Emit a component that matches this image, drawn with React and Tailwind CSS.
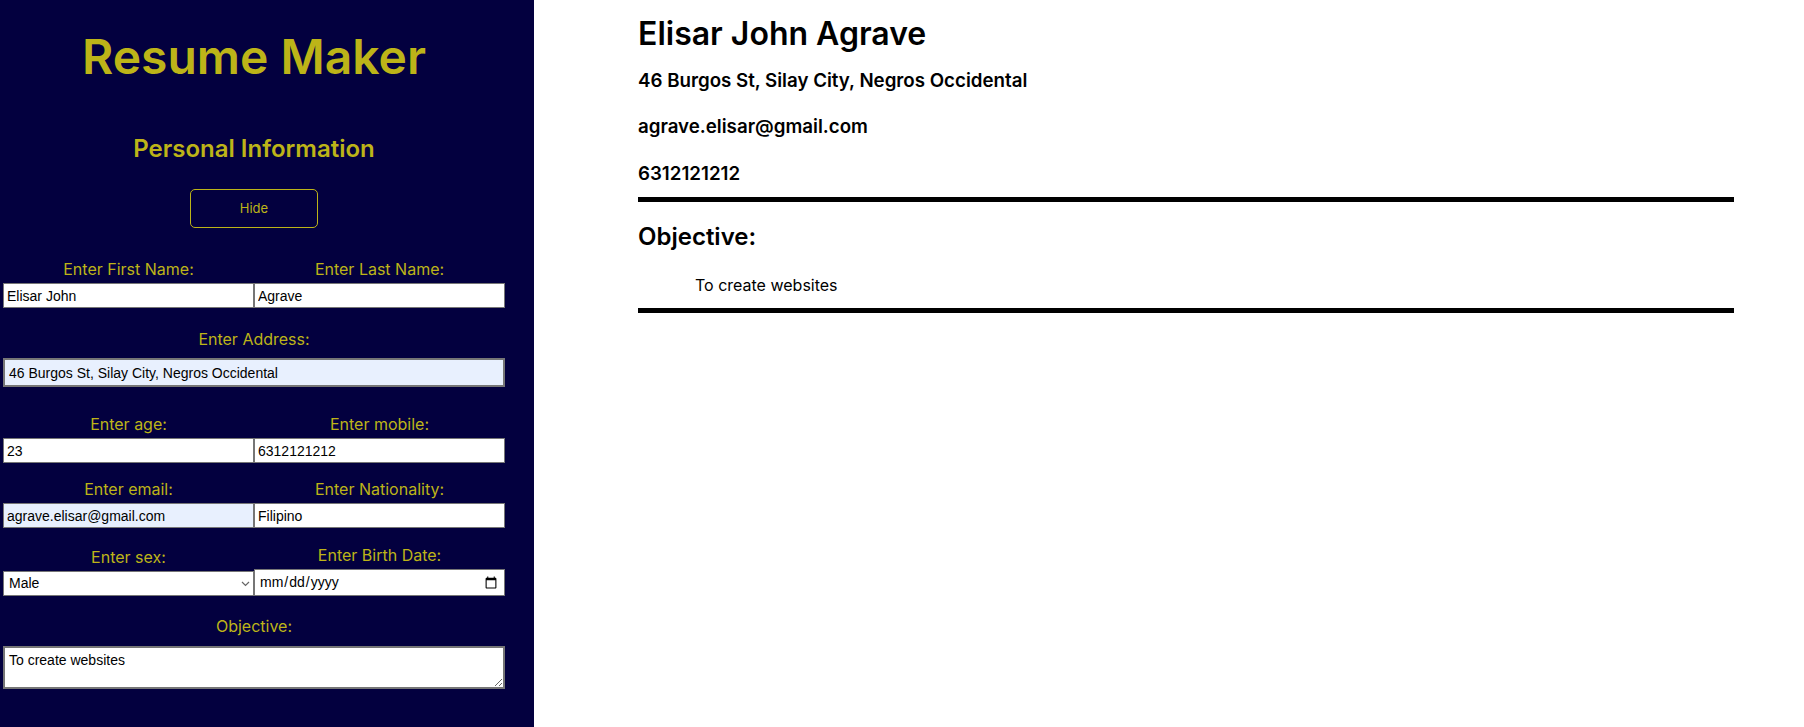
import React, { useState } from "react";

const LabelText = ({ children }) => (
  <label className="block text-center text-[16px] leading-[24px] text-[#bdb418]">{children}</label>
);

const inputCls =
  "block w-full h-[25px] border border-[#767676] bg-white px-[3px] text-[14px] text-black font-['Liberation_Sans',Arial,sans-serif] outline-none";

const App = () => {
  const [form, setForm] = useState({
    firstName: "Elisar John",
    lastName: "Agrave",
    address: "46 Burgos St, Silay City, Negros Occidental",
    age: "23",
    mobile: "6312121212",
    email: "agrave.elisar@gmail.com",
    nationality: "Filipino",
    sex: "Male",
    birthDate: "",
    objective: "To create websites",
  });
  const [hidden, setHidden] = useState(false);

  const update = (key) => (e) => setForm({ ...form, [key]: e.target.value });

  return (
    <div className="flex min-h-screen font-['Inter',sans-serif]">
      {/* Form side */}
      <div className="w-[534px] shrink-0 bg-[#03003f]">
        <div className="w-[508px] flex flex-col items-center pb-8">
          <h1 className="mt-[33px] text-[48px] leading-[48px] font-semibold text-[#bdb418]">Resume Maker</h1>
          <h2 className="mt-[56px] text-[24px] leading-[24px] font-semibold text-[#bdb418]">Personal Information</h2>
          <button
            onClick={() => setHidden(!hidden)}
            className="mt-[28px] w-[128px] h-[39px] rounded-[5px] border border-[#bdb418] text-[13px] text-[#bdb418]"
          >
            {hidden ? "Show" : "Hide"}
          </button>

          {!hidden && (
            <div className="w-[502px] ml-[3px] self-start">
              {/* Names */}
              <div className="mt-[29px] grid grid-cols-2 items-end">
                <div>
                  <LabelText>Enter First Name:</LabelText>
                  <input className={`mt-[2px] ${inputCls}`} value={form.firstName} onChange={update("firstName")} />
                </div>
                <div>
                  <LabelText>Enter Last Name:</LabelText>
                  <input className={`mt-[2px] ${inputCls}`} value={form.lastName} onChange={update("lastName")} />
                </div>
              </div>

              {/* Address */}
              <div className="mt-[19px]">
                <LabelText>Enter Address:</LabelText>
                <input
                  className="mt-[7px] block w-full h-[29px] border-2 border-[#767676] bg-[#e8f0fe] px-[4px] text-[14px] text-black font-['Liberation_Sans',Arial,sans-serif] outline-none"
                  value={form.address}
                  onChange={update("address")}
                />
              </div>

              {/* Age / mobile */}
              <div className="mt-[25px] grid grid-cols-2 items-end">
                <div>
                  <LabelText>Enter age:</LabelText>
                  <input className={`mt-[2px] ${inputCls}`} value={form.age} onChange={update("age")} />
                </div>
                <div>
                  <LabelText>Enter mobile:</LabelText>
                  <input className={`mt-[2px] ${inputCls}`} value={form.mobile} onChange={update("mobile")} />
                </div>
              </div>

              {/* Email / nationality */}
              <div className="mt-[14px] grid grid-cols-2 items-end">
                <div>
                  <LabelText>Enter email:</LabelText>
                  <input
                    className={`mt-[2px] ${inputCls} !bg-[#e8f0fe]`}
                    value={form.email}
                    onChange={update("email")}
                  />
                </div>
                <div>
                  <LabelText>Enter Nationality:</LabelText>
                  <input className={`mt-[2px] ${inputCls}`} value={form.nationality} onChange={update("nationality")} />
                </div>
              </div>

              {/* Sex / birth date */}
              <div className="mt-[15px] grid grid-cols-2 items-end">
                <div>
                  <LabelText>Enter sex:</LabelText>
                  <div className="relative mt-[2px]">
                    <select
                      className={`${inputCls} appearance-none !pl-[5px]`}
                      value={form.sex}
                      onChange={update("sex")}
                    >
                      <option>Male</option>
                      <option>Female</option>
                    </select>
                    <svg
                      className="pointer-events-none absolute right-[4px] top-[10px]"
                      width="9"
                      height="6"
                      viewBox="0 0 9 6"
                      fill="none"
                      stroke="#666"
                      strokeWidth="1.2"
                    >
                      <path d="M1 1l3.5 3.5L8 1" />
                    </svg>
                  </div>
                </div>
                <div>
                  <LabelText>Enter Birth Date:</LabelText>
                  <input
                    type="date"
                    className="mt-[2px] block w-full h-[27px] border border-[#767676] bg-white px-[4px] text-[14px] text-black font-['Liberation_Sans',Arial,sans-serif] outline-none"
                    value={form.birthDate}
                    onChange={update("birthDate")}
                  />
                </div>
              </div>

              {/* Objective */}
              <div className="mt-[18px]">
                <LabelText>Objective:</LabelText>
                <textarea
                  className="mt-[8px] block w-full h-[43px] border-2 border-[#767676] bg-white px-[4px] py-[4px] text-[14px] leading-[16px] text-black font-['Liberation_Sans',Arial,sans-serif] outline-none"
                  value={form.objective}
                  onChange={update("objective")}
                />
              </div>
            </div>
          )}
        </div>
      </div>

      {/* Preview side */}
      <div className="flex-1 bg-white pl-[104px]">
        <div className="w-[1096px] text-black">
          <h1 className="mt-[14px] text-[32px] leading-[40px] font-semibold">
            {form.firstName} {form.lastName}
          </h1>
          <h3 className="mt-[13px] text-[18.72px] leading-[28px] font-semibold">{form.address}</h3>
          <h3 className="mt-[18px] text-[18.72px] leading-[28px] font-semibold">{form.email}</h3>
          <h3 className="mt-[19px] text-[18.72px] leading-[28px] font-semibold">{form.mobile}</h3>
          <div className="mt-[9px] h-[5px] bg-black" />
          <h2 className="mt-[20px] text-[24px] leading-[30px] font-semibold">Objective:</h2>
          <p className="mt-[21px] pl-[57px] text-[16px] leading-[24px]">{form.objective}</p>
          <div className="mt-[11px] h-[5px] bg-black" />
        </div>
      </div>
    </div>
  );
};

export default App;
